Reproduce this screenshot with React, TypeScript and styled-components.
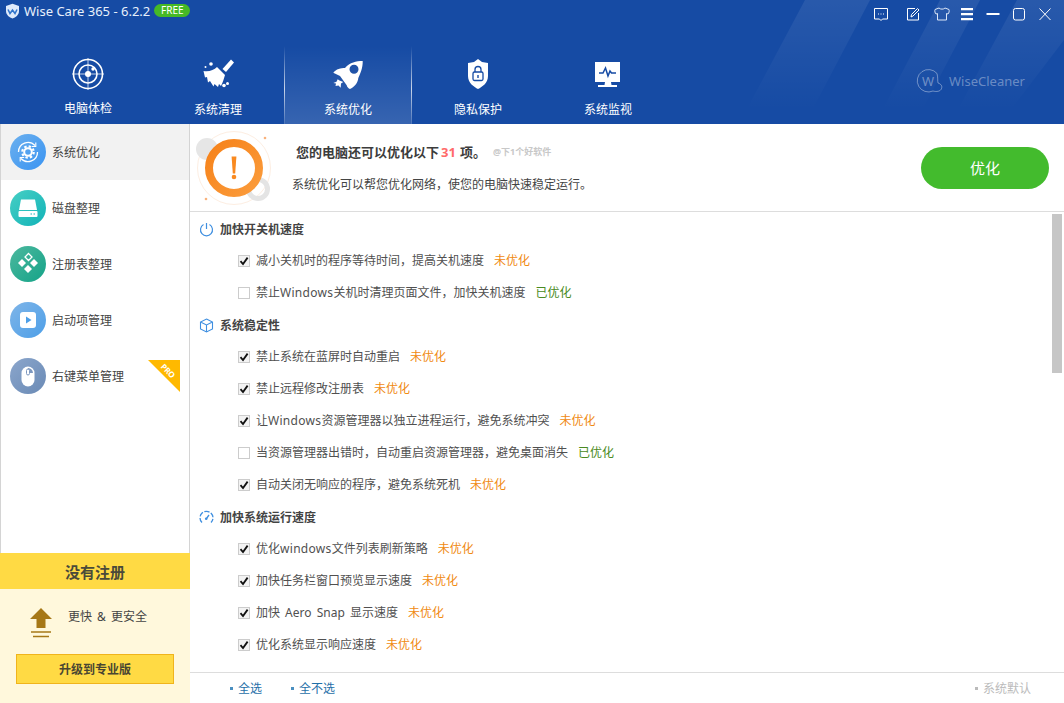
import React from 'react';
import styled, { createGlobalStyle } from 'styled-components';

const Global = createGlobalStyle`
  html, body { margin: 0; padding: 0; background: #fff; }
  body { font-family: "Noto Sans", "Noto Sans CJK SC", sans-serif; font-size: 12px; color: #444; }
  * { box-sizing: border-box; }
`;

const Page = styled.div`
  width: 1064px; height: 703px; overflow: hidden; display: flex; flex-direction: column; position: relative; background: #fff;
`;
const Header = styled.header`
  height: 124px; background: #164ba4; position: relative; overflow: hidden; display: flex; flex-direction: column; flex: none;
`;
const Streaks = styled.svg`
  position: absolute; right: 0; top: 0; width: 384px; height: 124px; pointer-events: none;
`;
const TitleBar = styled.div`
  height: 46px; flex: none; display: flex; align-items: flex-start; padding: 3px 0 0 5px; position: relative;
`;
const AppName = styled.span`
  color: #e8f0fb; font: 13px/16px "Noto Sans", sans-serif; margin-left: 4px; white-space: nowrap;
`;
const FreeBadge = styled.span`
  margin-left: 4px; margin-top: 1px; width: 36px; height: 13px; border-radius: 7px; background: #46b926; color: #fff;
  font: 10px/13px "Noto Sans", sans-serif; text-align: center;
`;
const WindowControls = styled.div`
  position: absolute; top: 5px; left: 872px; display: flex; align-items: center;
`;
const Ctl = styled.svg<{ $w: number }>`
  width: 18px; height: 18px; flex: none; margin-right: ${p => p.$w}px;
`;
const Nav = styled.nav`
  flex: 1; display: flex; padding-left: 23px; position: relative;
`;
const Tab = styled.div<{ $active?: boolean }>`
  width: 130px; display: flex; flex-direction: column; align-items: center; padding-top: 10px; position: relative; color: #fff;
  ${p => p.$active ? `
    background: linear-gradient(to bottom, rgba(255,255,255,0) 0%, rgba(255,255,255,.14) 100%);
    margin: 0 1px; width: 128px;
    &::before, &::after { content: ""; position: absolute; top: 0; bottom: 0; width: 1px;
      background: linear-gradient(to bottom, rgba(255,255,255,0), rgba(255,255,255,.75) 55%, rgba(255,255,255,.1)); }
    &::before { left: 0; } &::after { right: 0; }
  ` : ''}
`;
const TabLabel = styled.span<{ $up?: boolean }>`
  font-size: 12px; line-height: 16px; margin-top: ${p => (p.$up ? 9 : 10)}px; color: #fff;
`;
const Brand = styled.div`
  position: absolute; left: 916px; top: 22px; display: flex; align-items: center; gap: 6px; color: rgba(255,255,255,.36);
  font: 13px/20px "Noto Sans", sans-serif;
`;
const Body = styled.div`
  flex: 1; display: flex; min-height: 0;
`;
const Side = styled.aside`
  width: 190px; flex: none; display: flex; flex-direction: column;
`;
const SideList = styled.div`
  flex: 1; border-left: 1px solid #d4d4d4; border-right: 1px solid #d4d4d4;
`;
const SideItem = styled.div<{ $active?: boolean }>`
  height: 56px; display: flex; align-items: center; padding-left: 9px; gap: 6px; position: relative;
  background: ${p => (p.$active ? '#f2f2f2' : '#fff')}; color: #444; font-size: 12px; line-height: 16px;
`;
const SideLabel = styled.span`
  margin-top: 2px;
`;
const SideCircle = styled.div<{ $c1: string; $c2: string }>`
  width: 36px; height: 36px; border-radius: 50%; background: linear-gradient(135deg, ${p => p.$c1}, ${p => p.$c2});
  display: flex; align-items: center; justify-content: center;
`;
const ProRibbon = styled.svg`
  position: absolute; left: 147px; top: 12px; width: 32px; height: 32px;
`;
const RegBanner = styled.div`
  height: 36px; flex: none; background: #ffda44; text-align: center; line-height: 38px; font-size: 15px; font-weight: 700; color: #4a4a3a;
`;
const Promo = styled.div`
  height: 114px; flex: none; background: #fff8dc; padding: 0 16px; display: flex; flex-direction: column;
`;
const PromoRow = styled.div`
  height: 65px; display: flex; align-items: flex-start; padding: 19px 0 0 14px; gap: 16px; color: #444; line-height: 16px;
`;
const PromoText = styled.span`
  margin-top: 1px; word-spacing: 2px;
`;
const Upgrade = styled.div`
  width: 158px; height: 30px; padding-top: 1px; border: 1px solid #f0b41c; background: #ffda44; text-align: center; line-height: 28px; font-weight: 700; color: #4a4632;
`;
const Main = styled.main`
  flex: 1; display: flex; flex-direction: column; position: relative; min-width: 0;
`;
const Summary = styled.div`
  height: 88px; flex: none; border-bottom: 1px solid #ddd; display: flex; position: relative;
`;
const Gauge = styled.svg`
  width: 88px; height: 88px; flex: none;
`;
const SummaryText = styled.div`
  flex: 1; padding: 19px 0 0 14px;
`;
const Headline = styled.div`
  display: flex; align-items: center; height: 18px; padding-left: 4px; font-size: 13px; font-weight: 700; color: #3c3c3c; line-height: 18px;
`;
const Count = styled.span`
  color: #ff6b6b; margin: 0 4px 0 2px;
`;
const Watermark = styled.span`
  margin-left: 7px; font-size: 9px; font-weight: 700; color: #c8c8c8;
`;
const SubText = styled.div`
  margin-top: 16px; font-size: 12px; line-height: 16px; color: #444;
`;
const OptimizeBtn = styled.div`
  position: absolute; left: 731px; top: 23px; width: 128px; height: 42px; border-radius: 21px; background: #43bb2d;
  color: #fff; text-align: center; line-height: 42px; font-size: 15px;
`;
const List = styled.div`
  flex: 1; padding-top: 1px; min-height: 0; overflow: hidden;
`;
const Scroll = styled.div`
  position: absolute; left: 862px; top: 90px; width: 10px; height: 159px; background: #c6c6c6;
`;
const Section = styled.div`
  height: 32px; display: flex; align-items: center; padding: 1px 0 0 9px; gap: 6px; font-weight: 700; color: #444; line-height: 16px;
`;
const Row = styled.div`
  height: 32px; display: flex; align-items: center; padding: 0 0 1px 48px; color: #505050; line-height: 16px; white-space: pre; word-spacing: 2px;
`;
const Latin = styled.span`
  letter-spacing: .3px;
`;
const Box = styled.span<{ $on: boolean }>`
  width: 12px; height: 12px; flex: none; border: 1px solid #ccc; background: ${p => (p.$on ? '#f3f3f3' : '#fff')}; margin-right: 6px;
  display: flex; align-items: center; justify-content: center;
`;
const Status = styled.span<{ $done: boolean }>`
  margin-left: 10px; color: ${p => (p.$done ? '#4a8a22' : '#f08a12')};
`;
const Footer = styled.div`
  height: 31px; flex: none; border-top: 1px solid #ddd; display: flex; align-items: center; padding: 1px 33px 0 40px; position: relative;
`;
const FootLink = styled.span<{ $muted?: boolean; $gap?: number }>`
  display: flex; align-items: center; gap: 5px; color: ${p => (p.$muted ? '#bbb' : '#1f6fa8')}; line-height: 16px;
  margin-left: ${p => p.$gap ?? 0}px;
  &::before { content: ""; width: 3px; height: 3px; background: ${p => (p.$muted ? '#bbb' : '#4a8fc0')}; }
`;
const Spacer = styled.div`flex: 1;`;

const W = { fill: 'none', stroke: '#fff' } as const;

const Check = () => (
  <svg width="10" height="10" viewBox="0 0 10 10"><path d="M1.5 5.2 L4 8 L8.6 1.6" fill="none" stroke="#111" strokeWidth="1.8" /></svg>
);

const Item = ({ t, on = true }: { t: string; on?: boolean }) => (
  <Row>
    <Box $on={on}>{on && <Check />}</Box>
    <span>{t.split(/([Ww]indows)/).map((s, i) => (i % 2 ? <Latin key={i}>{s}</Latin> : s))}</span>
    <Status $done={!on}>{on ? '未优化' : '已优化'}</Status>
  </Row>
);

const navIcons = [
  <svg width="36" height="36" viewBox="0 0 36 36" key="a">
    <circle cx="18" cy="18" r="14.5" {...W} strokeWidth="1.6" />
    <circle cx="18" cy="18" r="9" {...W} strokeWidth="1.6" />
    <path d="M18 2V34M2 18H34" {...W} strokeWidth="1" opacity=".75" />
    <circle cx="18" cy="18" r="3" fill="#fff" />
    <circle cx="23" cy="13" r="1.7" fill="#fff" />
  </svg>,
  <svg width="36" height="36" viewBox="0 0 36 36" key="b">
    <path d="M31 3.5L34 6.5L26 16L22.5 13Z" fill="#fff" />
    <path d="M3.5 15C9 16 14 14 17 11L25 19C24 22 23 26 21 30L19 28L18 31L14.5 28L13.5 30.5L10 25L8 26.5L7 21L5 21.5Z" fill="#fff" />
    <circle cx="11" cy="8" r="1.8" fill="#fff" />
    <circle cx="5.5" cy="11" r="1" fill="#fff" />
    <circle cx="27.5" cy="27.5" r="1.5" fill="#fff" />
    <circle cx="24" cy="29.5" r="1.8" fill="#fff" />
  </svg>,
  <svg width="36" height="36" viewBox="0 0 36 36" key="c">
    <path fillRule="evenodd" fill="#fff" d="M32.7 5C26 5 20 6.5 15 12C11 12 6 13 3.3 16.7L10 20L16.7 29.3C17 31 18.5 32.5 20 33C24 31 28 27 28.3 22C30 18 33 12 32.7 5ZM24 8.8A4.5 4.5 0 1 0 24.01 17.8A4.5 4.5 0 1 0 24 8.8Z" />
    <path d="M7.7 23.3L9.5 24.5L13.3 26L11 27.5L10.7 31.7L8.5 29.5L5.5 30L6 27.5L3.3 27L6.5 25.8Z" fill="#fff" />
  </svg>,
  <svg width="36" height="36" viewBox="0 0 36 36" key="d">
    <path d="M18 3 L22 6 L28 7 V20 C28 27 22 31 18 33 C14 31 8 27 8 20 V7 L14 6 Z" fill="#fff" />
    <rect x="13" y="16" width="10" height="8.5" rx="1.5" fill="none" stroke="#164ba4" strokeWidth="1.3" />
    <path d="M15 16 V13.5 A3 3 0 0 1 21 13.5 V16" fill="none" stroke="#164ba4" strokeWidth="1.3" />
    <rect x="17.3" y="19" width="1.4" height="3" fill="#164ba4" />
  </svg>,
  <svg width="36" height="36" viewBox="0 0 36 36" key="e">
    <rect x="5" y="6" width="25" height="20" fill="#fff" />
    <path d="M9 17 H13 L15.5 12 L18 20 L20 15 L21.5 17 H26" fill="none" stroke="#164ba4" strokeWidth="1.5" />
    <path d="M15 26 H21 L21.5 29 H27 V31 H8 V29 H14.5 Z" fill="#fff" />
  </svg>,
];

export default function App() {
  return (
    <Page>
      <Global />
      <Header>
        <Streaks viewBox="0 0 384 124">
          <defs>
            <linearGradient id="st" gradientUnits="userSpaceOnUse" x1="0" y1="0" x2="0" y2="110">
              <stop offset="0" stopColor="#fff" stopOpacity=".08" />
              <stop offset="1" stopColor="#fff" stopOpacity="0" />
            </linearGradient>
          </defs>
          <polygon points="125,0 190,0 125,124 59,124" fill="url(#st)" />
          <polygon points="260,0 300,0 235,124 195,124" fill="url(#st)" />
          <polygon points="337,0 384,0 384,40 320,124 270,124" fill="url(#st)" />
        </Streaks>
        <TitleBar>
          <svg width="15" height="16" viewBox="0 0 15 16">
            <path d="M7.5 .8 L14 3 V8 C14 12 10.5 14.5 7.5 15.5 C4.5 14.5 1 12 1 8 V3 Z" fill="#dfeafb" />
            <path d="M3 6.5 L5 10.5 L7.5 7 L10 10.5 L12 6.5" fill="none" stroke="#2f74cc" strokeWidth="1.5" />
          </svg>
          <AppName>Wise Care 365 - 6.2.2</AppName>
          <FreeBadge>FREE</FreeBadge>
          <WindowControls>
            <Ctl $w={14} viewBox="0 0 18 18"><path d="M2.5 3.5H15.5V14H10.5L9 15.5L7.5 14H2.5Z" {...W} strokeWidth="1" /><path d="M6 9H7M8.5 9H9.5M11 9H12" {...W} /></Ctl>
            <Ctl $w={10.5} viewBox="0 0 18 18"><path d="M11 3.5H3.5V15H14.5V8" {...W} strokeWidth="1" /><path d="M7 12L7.5 9.5L13.5 3.5L15 5L9 11Z" {...W} strokeWidth="1" /></Ctl>
            <Ctl $w={7.5} viewBox="0 0 18 18"><path d="M6 3 C7 4.5 11 4.5 12 3 L16 4.5 C16.5 6 16 8 15 9 L13.5 8.5 V15 H4.5 V8.5 L3 9 C2 8 1.5 6 2 4.5 Z" fill="none" stroke="#dbe6f7" strokeWidth="1" /></Ctl>
            <Ctl $w={7.5} viewBox="0 0 18 18"><path d="M3 4.2H15M3 9.2H15M3 14.2H15" {...W} strokeWidth="2.2" /></Ctl>
            <Ctl $w={8.5} viewBox="0 0 18 18"><path d="M2.5 9H15.5" {...W} strokeWidth="2" /></Ctl>
            <Ctl $w={8} viewBox="0 0 18 18"><rect x="3.5" y="3.5" width="11" height="11.5" rx="2" {...W} strokeWidth="1" /></Ctl>
            <Ctl $w={0} viewBox="0 0 18 18"><path d="M3.5 3.5L14.5 15M14.5 3.5L3.5 15" {...W} strokeWidth="1" /></Ctl>
          </WindowControls>
        </TitleBar>
        <Nav>
          {['电脑体检', '系统清理', '系统优化', '隐私保护', '系统监视'].map((t, i) => (
            <Tab key={t} $active={i === 2}>
              {navIcons[i]}
              <TabLabel $up={i === 0}>{t}</TabLabel>
            </Tab>
          ))}
          <Brand>
            <svg width="27" height="26" viewBox="0 0 27 26">
              <path d="M17 23 A11.2 11.2 0 1 1 21 5.5 C22 9 21.5 13 22 15 C25 16 26.5 18 25.5 20.5 C24.5 23.5 20.5 24 17 23 Z" fill="none" stroke="rgba(255,255,255,.38)" strokeWidth="1" />
              <text x="12" y="17.5" textAnchor="middle" fontSize="13" fontFamily="Noto Sans, sans-serif" fill="rgba(255,255,255,.38)">W</text>
            </svg>
            WiseCleaner
          </Brand>
        </Nav>
      </Header>
      <Body>
        <Side>
          <SideList>
            <SideItem $active>
              <SideCircle $c1="#6cb0ee" $c2="#3a94f2">
                <svg width="26" height="26" viewBox="0 0 26 26">
                  <path d="M3.5 13A9.5 9.5 0 0 1 20 6.5M22.5 13A9.5 9.5 0 0 1 6 19.5" fill="none" stroke="#fff" strokeWidth="1.3" />
                  <path d="M20.8 3.5V7.5H16.8M5.2 22.5V18.5H9.2" fill="none" stroke="#fff" strokeWidth="1.1" />
                  <circle cx="13" cy="13" r="5.7" fill="none" stroke="#fff" strokeWidth="2.2" strokeDasharray="2.4 2.07" />
                  <circle cx="13" cy="13" r="3.8" fill="none" stroke="#fff" strokeWidth="2" />
                </svg>
              </SideCircle>
              <SideLabel>系统优化</SideLabel>
            </SideItem>
            <SideItem>
              <SideCircle $c1="#47cfc4" $c2="#12b3b8">
                <svg width="24" height="24" viewBox="0 0 24 24">
                  <path d="M5 3.5H19L21 14H3Z" fill="#fff" />
                  <rect x="2.5" y="15" width="19" height="6" rx="1" fill="#fff" />
                  <path d="M14.5 18H16M17.5 18H19" stroke="#18b5b8" strokeWidth="1.2" />
                </svg>
              </SideCircle>
              <SideLabel>磁盘整理</SideLabel>
            </SideItem>
            <SideItem>
              <SideCircle $c1="#4cb89e" $c2="#15a388">
                <svg width="24" height="24" viewBox="0 0 24 24">
                  <path d="M12.5 1.5L16 5L12.5 8.5L9 5Z" fill="none" stroke="#fff" strokeWidth="1.3" />
                  <path d="M6 7L10 11L6 15L2 11ZM18 7L22 11L18 15L14 11ZM12 13L16 17L12 21L8 17Z" fill="#fff" />
                </svg>
              </SideCircle>
              <SideLabel>注册表整理</SideLabel>
            </SideItem>
            <SideItem>
              <SideCircle $c1="#7fb5e8" $c2="#4d9fe8">
                <svg width="24" height="24" viewBox="0 0 24 24">
                  <rect x="4" y="4" width="16" height="16" rx="3" fill="#fff" />
                  <path d="M10 8.5L15.5 12L10 15.5Z" fill="#4d9fe8" />
                </svg>
              </SideCircle>
              <SideLabel>启动项管理</SideLabel>
            </SideItem>
            <SideItem>
              <SideCircle $c1="#8ba6cc" $c2="#6a8ab5">
                <svg width="24" height="24" viewBox="0 0 24 24">
                  <rect x="5.5" y="2.5" width="13" height="20" rx="6.5" fill="#fff" />
                  <path d="M12 4 A5.5 5.5 0 0 1 17 9 H12Z" fill="#7c97bf" />
                  <rect x="10.5" y="5" width="3" height="6" rx="1.5" fill="#fff" stroke="#7c97bf" />
                </svg>
              </SideCircle>
              <SideLabel>右键菜单管理</SideLabel>
              <ProRibbon viewBox="0 0 32 32">
                <polygon points="0,0 32,0 32,32" fill="#ffb900" />
                <text x="18" y="13" fill="#fff" fontSize="8" fontWeight="700" fontFamily="Noto Sans, sans-serif" textAnchor="middle" transform="rotate(45 18 13)">PRO</text>
              </ProRibbon>
            </SideItem>
          </SideList>
          <RegBanner>没有注册</RegBanner>
          <Promo>
            <PromoRow>
              <svg width="22" height="30" viewBox="0 0 22 30">
                <path d="M11 0L22 11H15.5V20H6.5V11H0Z" fill="#a67817" />
                <path d="M1 24H21M3 28.5H19" stroke="#a67817" strokeWidth="1.6" />
              </svg>
              <PromoText>更快 &amp; 更安全</PromoText>
            </PromoRow>
            <Upgrade>升级到专业版</Upgrade>
          </Promo>
        </Side>
        <Main>
          <Summary>
            <Gauge viewBox="0 0 88 88">
              <defs>
                <linearGradient id="ring" x1="0" y1="0" x2="1" y2="1">
                  <stop offset="0" stopColor="#f6821a" />
                  <stop offset="1" stopColor="#fb9c3c" />
                </linearGradient>
              </defs>
              <circle cx="44" cy="44" r="36.5" fill="none" stroke="#fdeee2" strokeWidth="1" />
              <circle cx="17" cy="25" r="11" fill="#e6e6e6" />
              <circle cx="68" cy="65" r="9.5" fill="none" stroke="#e4e4e4" strokeWidth="5" />
              <circle cx="44" cy="44" r="25" fill="#fff" stroke="url(#ring)" strokeWidth="8" />
              <path d="M41.6 32.5H46.4L45.2 49.5H42.8Z" fill="#f98a20" />
              <circle cx="44" cy="53" r="2.3" fill="#f98a20" />
              <circle cx="75" cy="14" r="1.3" fill="#f9b27c" />
              <circle cx="16" cy="75" r="1.3" fill="#f9b27c" />
            </Gauge>
            <SummaryText>
              <Headline>您的电脑还可以优化以下<Count>31</Count>项。<Watermark>@下1个好软件</Watermark></Headline>
              <SubText>系统优化可以帮您优化网络，使您的电脑快速稳定运行。</SubText>
            </SummaryText>
            <OptimizeBtn>优化</OptimizeBtn>
          </Summary>
          <List>
            <Section>
              <svg width="15" height="15" viewBox="0 0 15 15"><path d="M7.5 1V7" fill="none" stroke="#3f8fe0" strokeWidth="1.2" /><path d="M4.5 2.6 A6 6 0 1 0 10.5 2.6" fill="none" stroke="#3f8fe0" strokeWidth="1.2" /></svg>
              加快开关机速度
            </Section>
            <Item t="减小关机时的程序等待时间，提高关机速度" />
            <Item t="禁止Windows关机时清理页面文件，加快关机速度" on={false} />
            <Section>
              <svg width="15" height="15" viewBox="0 0 15 15"><path d="M7.5 1L13.5 4V11L7.5 14L1.5 11V4ZM1.5 4L7.5 7L13.5 4M7.5 7V14" fill="none" stroke="#3f8fe0" strokeWidth="1.1" /></svg>
              系统稳定性
            </Section>
            <Item t="禁止系统在蓝屏时自动重启" />
            <Item t="禁止远程修改注册表" />
            <Item t="让Windows资源管理器以独立进程运行，避免系统冲突" />
            <Item t="当资源管理器出错时，自动重启资源管理器，避免桌面消失" on={false} />
            <Item t="自动关闭无响应的程序，避免系统死机" />
            <Section>
              <svg width="15" height="15" viewBox="0 0 15 15"><path d="M3 12.5 A6.5 6.5 0 1 1 12 12.5" fill="none" stroke="#3f8fe0" strokeWidth="1.3" strokeDasharray="5 1.5" /><path d="M7.5 8.5L10 5" stroke="#3f8fe0" strokeWidth="1.3" /><circle cx="7.2" cy="8.8" r="1.3" fill="#3f8fe0" /></svg>
              加快系统运行速度
            </Section>
            <Item t="优化windows文件列表刷新策略" />
            <Item t="加快任务栏窗口预览显示速度" />
            <Item t="加快 Aero Snap 显示速度" />
            <Item t="优化系统显示响应速度" />
          </List>
          <Scroll />
          <Footer>
            <FootLink>全选</FootLink>
            <FootLink $gap={29}>全不选</FootLink>
            <Spacer />
            <FootLink $muted>系统默认</FootLink>
          </Footer>
        </Main>
      </Body>
    </Page>
  );
}
